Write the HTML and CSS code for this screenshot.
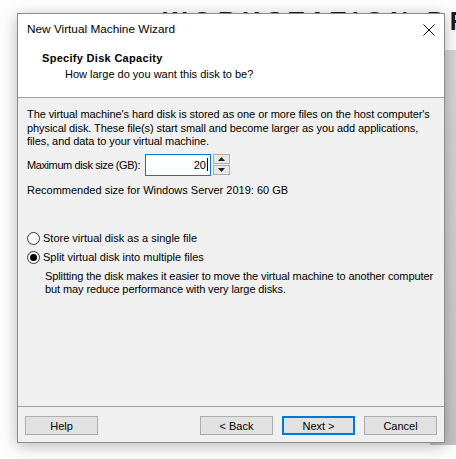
FILE: index.html
```html
<!DOCTYPE html>
<html>
<head>
<meta charset="utf-8">
<link rel="stylesheet" href="styles.css">
</head>
<body>
<div class="desktop">
  <div class="bg-title">WORKSTATION PRO</div>
  <div class="bg-panel"></div>
  <div class="dialog">
    <div class="head">
      <div class="titlebar">
        <span class="title">New Virtual Machine Wizard</span>
        <svg class="close" width="12" height="12" viewBox="0 0 12 12"><path d="M0.5 0.5 L11.5 11.5 M11.5 0.5 L0.5 11.5" stroke="#000" stroke-width="1" fill="none"/></svg>
      </div>
      <div class="page-head">
        <div class="page-title">Specify Disk Capacity</div>
        <div class="page-sub">How large do you want this disk to be?</div>
      </div>
    </div>
    <div class="body">
      <p class="intro">The virtual machine's hard disk is stored as one or more files on the host computer's<br>physical disk. These file(s) start small and become larger as you add applications,<br>files, and data to your virtual machine.</p>
      <div class="size-row">
        <span class="label">Maximum disk size (GB):</span>
        <div class="input"><span>20</span><i class="caret"></i></div>
        <div class="spin">
          <div class="spin-btn"><svg width="7" height="4" viewBox="0 0 7 4"><path d="M3.5 0 L7 4 L0 4 Z" fill="#222"/></svg></div>
          <div class="spin-btn"><svg width="7" height="4" viewBox="0 0 7 4"><path d="M0 0 L7 0 L3.5 4 Z" fill="#222"/></svg></div>
        </div>
      </div>
      <p class="rec">Recommended size for Windows Server 2019: 60 GB</p>
      <div class="radios">
        <div class="radio-row"><span class="radio"></span><span>Store virtual disk as a single file</span></div>
        <div class="radio-row"><span class="radio checked"></span><span>Split virtual disk into multiple files</span></div>
        <p class="desc">Splitting the disk makes it easier to move the virtual machine to another computer<br>but may reduce performance with very large disks.</p>
      </div>
    </div>
    <div class="footer">
      <button class="btn">Help</button>
      <div class="spacer"></div>
      <button class="btn">&lt; Back</button>
      <button class="btn primary">Next &gt;</button>
      <button class="btn">Cancel</button>
    </div>
  </div>
</div>
</body>
</html>
```
FILE: styles.css
```css
* { box-sizing: border-box; }
html, body { margin: 0; padding: 0; }
body { width: 456px; height: 459px; overflow: hidden; background: #fdfdfd; font-family: "Liberation Sans", Arial, sans-serif; font-size: 11px; color: #000; }
.desktop { position: relative; width: 456px; height: 459px; overflow: hidden; }
.bg-title { position: absolute; left: 163px; top: 7px; font-size: 25px; font-weight: bold; letter-spacing: 6px; color: #1a1a1a; white-space: nowrap; }
.bg-panel { position: absolute; left: 430px; top: 50px; width: 40px; height: 395px; background: linear-gradient(#d6d6d6, #c4c4c4); }
.dialog { position: absolute; left: 17px; top: 13px; width: 428px; height: 430px; border: 1px solid #8c8c8c; background: #f0f0f0; display: flex; flex-direction: column; box-shadow: 0 3px 14px rgba(0,0,0,0.28); }
.head { background: #fff; height: 84px; border-bottom: 1px solid #a0a0a0; }
.titlebar { height: 30px; display: flex; align-items: center; justify-content: space-between; padding: 0 9px; }
.title { font-size: 11.8px; }
.close { margin-top: 1px; }
.page-head { padding: 6px 0 0 24px; }
.page-title { font-weight: bold; line-height: 16px; letter-spacing: 0.3px; }
.page-sub { padding-left: 23px; line-height: 16px; }
.body { flex: 1; padding: 10px 4px 0 9px; border-bottom: 1px solid #a0a0a0; white-space: nowrap; }
.intro { margin: 0; line-height: 13.5px; letter-spacing: -0.08px; }
.size-row { display: flex; align-items: center; margin-top: 5px; height: 22px; }
.label { width: 118px; letter-spacing: -0.4px; }
.input { width: 66px; height: 22px; border: 1px solid #0078d7; background: #fff; display: flex; align-items: center; justify-content: flex-end; padding-right: 2px; }
.caret { display: inline-block; width: 1px; height: 13px; background: #000; margin-left: 1px; }
.spin { margin-left: 2px; width: 17px; height: 21px; display: flex; flex-direction: column; gap: 1px; }
.spin-btn { flex: 1; border: 1px solid #adadad; background: #e8e8e8; display: flex; align-items: center; justify-content: center; }
.rec { margin: 7px 0 0; line-height: 14px; }
.radios { margin-top: 32px; }
.radio-row { display: flex; align-items: center; height: 19px; }
.radio { width: 13px; height: 13px; border: 1px solid #333; border-radius: 50%; background: #fff; margin-right: 3px; display: flex; align-items: center; justify-content: center; }
.radio.checked::after { content: ""; width: 7px; height: 7px; border-radius: 50%; background: #000; }
.desc { margin: 3px 0 0 18px; line-height: 13.5px; letter-spacing: -0.1px; }
.footer { height: 35px; display: flex; align-items: flex-start; gap: 9px; padding: 9px 7px 0 7px; }
.spacer { flex: 1; }
.btn { width: 73px; height: 19px; border: 1px solid #adadad; background: #e1e1e1; font-family: inherit; font-size: 11px; color: #000; padding: 0; }
.btn.primary { border: 2px solid #0078d7; }
```
